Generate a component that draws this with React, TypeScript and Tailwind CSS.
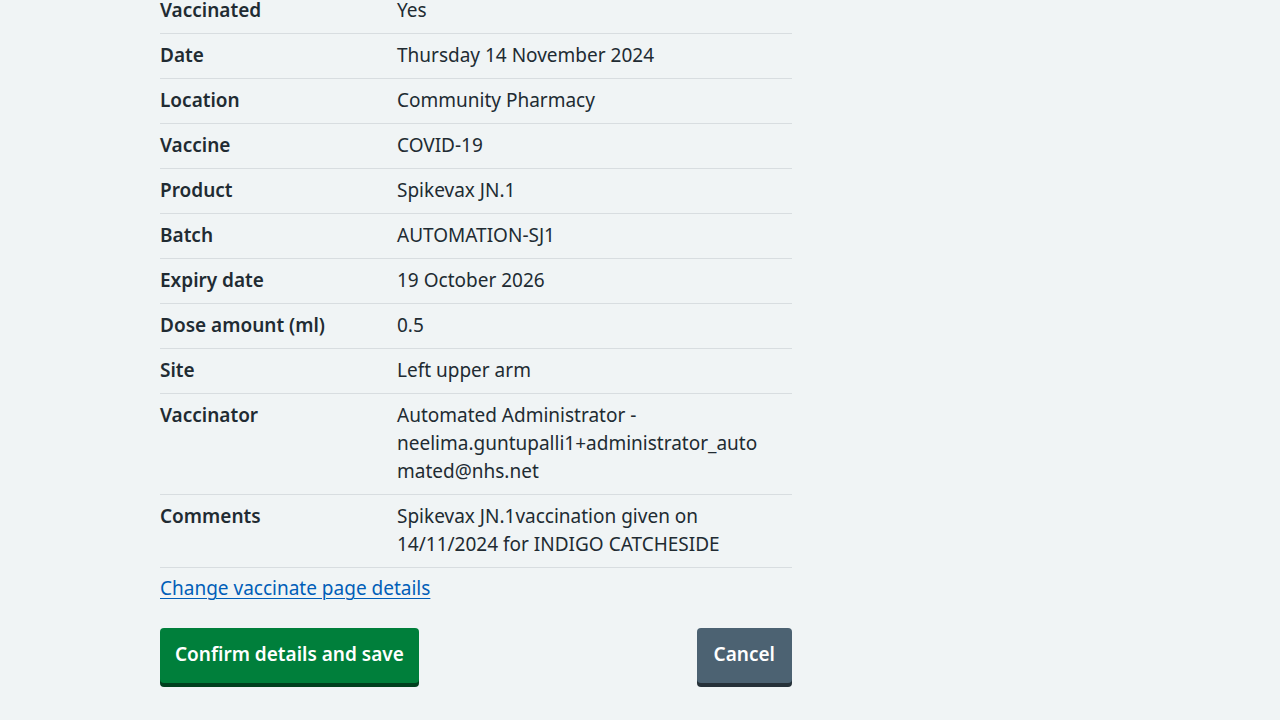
const rows: { key: string; value: string[] }[] = [
  { key: "Vaccinated", value: ["Yes"] },
  { key: "Date", value: ["Thursday 14 November 2024"] },
  { key: "Location", value: ["Community Pharmacy"] },
  { key: "Vaccine", value: ["COVID-19"] },
  { key: "Product", value: ["Spikevax JN.1"] },
  { key: "Batch", value: ["AUTOMATION-SJ1"] },
  { key: "Expiry date", value: ["19 October 2026"] },
  { key: "Dose amount (ml)", value: ["0.5"] },
  { key: "Site", value: ["Left upper arm"] },
  {
    key: "Vaccinator",
    value: [
      "Automated Administrator -",
      "neelima.guntupalli1+administrator_auto",
      "mated@nhs.net",
    ],
  },
  {
    key: "Comments",
    value: ["Spikevax JN.1vaccination given on", "14/11/2024 for INDIGO CATCHESIDE"],
  },
];

export default function App() {
  return (
    <div
      className="min-h-[720px] h-[720px] overflow-hidden bg-[#f0f4f5] text-[#212b32]"
      style={{ fontFamily: '"Noto Sans", Arial, sans-serif' }}
    >
      <div className="ml-[160px] w-[632px] -mt-[11px]">
        {/* Summary list */}
        <dl>
          {rows.map((row) => (
            <div
              key={row.key}
              className="flex border-b border-[#d8dde0] pt-[7px] pb-[9px] text-[19px] leading-[28px]"
            >
              <dt className="w-[237px] shrink-0 font-semibold">{row.key}</dt>
              <dd className="flex-1">
                {row.value.map((line) => (
                  <div key={line}>{line}</div>
                ))}
              </dd>
            </div>
          ))}
        </dl>

        <a
          href="#"
          className="mt-[6px] inline-block text-[19px] leading-[28px] text-[#005eb8] underline underline-offset-[3px] decoration-1"
        >
          Change vaccinate page details
        </a>

        {/* Actions */}
        <div className="mt-[26px] flex items-start justify-between">
          <button className="h-[55px] rounded-[4px] bg-[#007f3b] px-[15px] pb-[4px] text-[19px] font-semibold leading-[28px] text-white shadow-[0_4px_0_#00401e]">
            Confirm details and save
          </button>
          <button className="h-[55px] rounded-[4px] bg-[#4c6272] px-[17px] pb-[4px] text-[19px] font-semibold leading-[28px] text-white shadow-[0_4px_0_#263139]">
            Cancel
          </button>
        </div>
      </div>
    </div>
  );
}
